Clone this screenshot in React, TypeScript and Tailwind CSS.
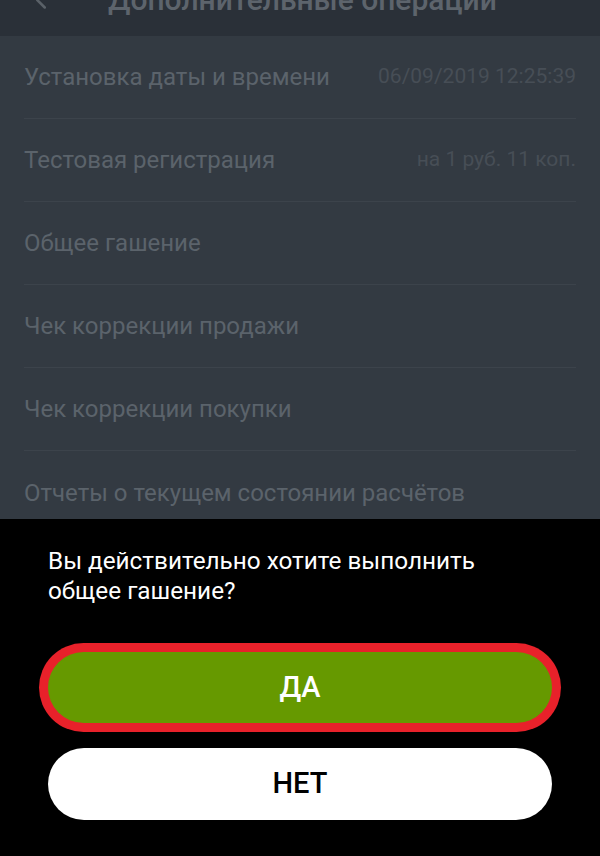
import { ChevronLeft } from "lucide-react";

const rows = [
  { label: "Установка даты и времени", value: "06/09/2019 12:25:39" },
  { label: "Тестовая регистрация", value: "на 1 руб. 11 коп." },
  { label: "Общее гашение", value: "" },
  { label: "Чек коррекции продажи", value: "" },
  { label: "Чек коррекции покупки", value: "" },
  { label: "Отчеты о текущем состоянии расчётов", value: "" },
];

const App = () => {
  return (
    <div className="h-[856px] w-[600px] flex flex-col overflow-hidden bg-black font-['Roboto','Liberation_Sans',sans-serif]">
      {/* Header (dimmed) */}
      <div className="h-[36px] shrink-0 overflow-hidden bg-[#2a3038]">
        <div className="flex items-center -mt-[20px] h-[40px]">
          <ChevronLeft size={30} strokeWidth={2} className="ml-[26px] text-[#5a6168]" />
          <span className="ml-[52px] text-[30px] font-medium text-[#5d646c] leading-none">
            Дополнительные операции
          </span>
        </div>
      </div>

      {/* List (dimmed) */}
      <div className="flex-1 min-h-0 overflow-hidden bg-[#333a42] px-[24px]">
        {rows.map((row, i) => (
          <div
            key={row.label}
            className={
              "h-[83px] flex items-center justify-between " +
              (i < rows.length - 1 ? "border-b border-[#3c434b]" : "")
            }
          >
            <span className="text-[24px] text-[#5b636b] whitespace-nowrap">{row.label}</span>
            {row.value && (
              <span className="text-[21px] text-[#474e56] whitespace-nowrap">{row.value}</span>
            )}
          </div>
        ))}
      </div>

      {/* Bottom sheet dialog */}
      <div className="h-[337px] shrink-0 bg-black px-[48px] pt-[27px]">
        <p className="text-[24.3px] leading-[30px] text-white">
          Вы действительно хотите выполнить
          <br />
          общее гашение?
        </p>
        <button className="mt-[46px] w-full h-[71px] rounded-full bg-[#669900] ring-[9px] ring-[#e8212a] text-white text-[29px] font-medium">
          ДА
        </button>
        <button className="mt-[25px] w-full h-[72px] rounded-full bg-white text-black text-[29px] font-medium">
          НЕТ
        </button>
      </div>
    </div>
  );
};

export default App;
